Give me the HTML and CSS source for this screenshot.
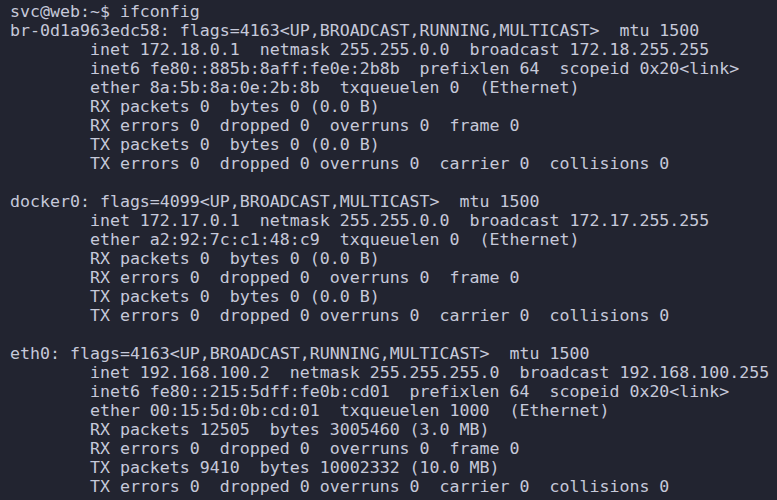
FILE: index.html
```html
<!DOCTYPE html>
<html>
<head>
<meta charset="utf-8">
<link rel="stylesheet" href="styles.css">
</head>
<body>
<pre class="term">svc@web:~$ ifconfig
br-0d1a963edc58: flags=4163&lt;UP,BROADCAST,RUNNING,MULTICAST&gt;  mtu 1500
        inet 172.18.0.1  netmask 255.255.0.0  broadcast 172.18.255.255
        inet6 fe80::885b:8aff:fe0e:2b8b  prefixlen 64  scopeid 0x20&lt;link&gt;
        ether 8a:5b:8a:0e:2b:8b  txqueuelen 0  (Ethernet)
        RX packets 0  bytes 0 (0.0 B)
        RX errors 0  dropped 0  overruns 0  frame 0
        TX packets 0  bytes 0 (0.0 B)
        TX errors 0  dropped 0 overruns 0  carrier 0  collisions 0

docker0: flags=4099&lt;UP,BROADCAST,MULTICAST&gt;  mtu 1500
        inet 172.17.0.1  netmask 255.255.0.0  broadcast 172.17.255.255
        ether a2:92:7c:c1:48:c9  txqueuelen 0  (Ethernet)
        RX packets 0  bytes 0 (0.0 B)
        RX errors 0  dropped 0  overruns 0  frame 0
        TX packets 0  bytes 0 (0.0 B)
        TX errors 0  dropped 0 overruns 0  carrier 0  collisions 0

eth0: flags=4163&lt;UP,BROADCAST,RUNNING,MULTICAST&gt;  mtu 1500
        inet 192.168.100.2  netmask 255.255.255.0  broadcast 192.168.100.255
        inet6 fe80::215:5dff:fe0b:cd01  prefixlen 64  scopeid 0x20&lt;link&gt;
        ether 00:15:5d:0b:cd:01  txqueuelen 1000  (Ethernet)
        RX packets 12505  bytes 3005460 (3.0 MB)
        RX errors 0  dropped 0  overruns 0  frame 0
        TX packets 9410  bytes 10002332 (10.0 MB)
        TX errors 0  dropped 0 overruns 0  carrier 0  collisions 0</pre>
</body>
</html>
```
FILE: styles.css
```css
html, body {
  margin: 0;
  padding: 0;
  background: #222430;
  height: 100%;
  overflow: hidden;
}
.term {
  margin: 0;
  padding: 2px 10px 0 10px;
  font-family: "DejaVu Sans Mono", monospace;
  font-size: 16.6px;
  line-height: 19px;
  color: #c6c9da;
  white-space: pre;
}
```
